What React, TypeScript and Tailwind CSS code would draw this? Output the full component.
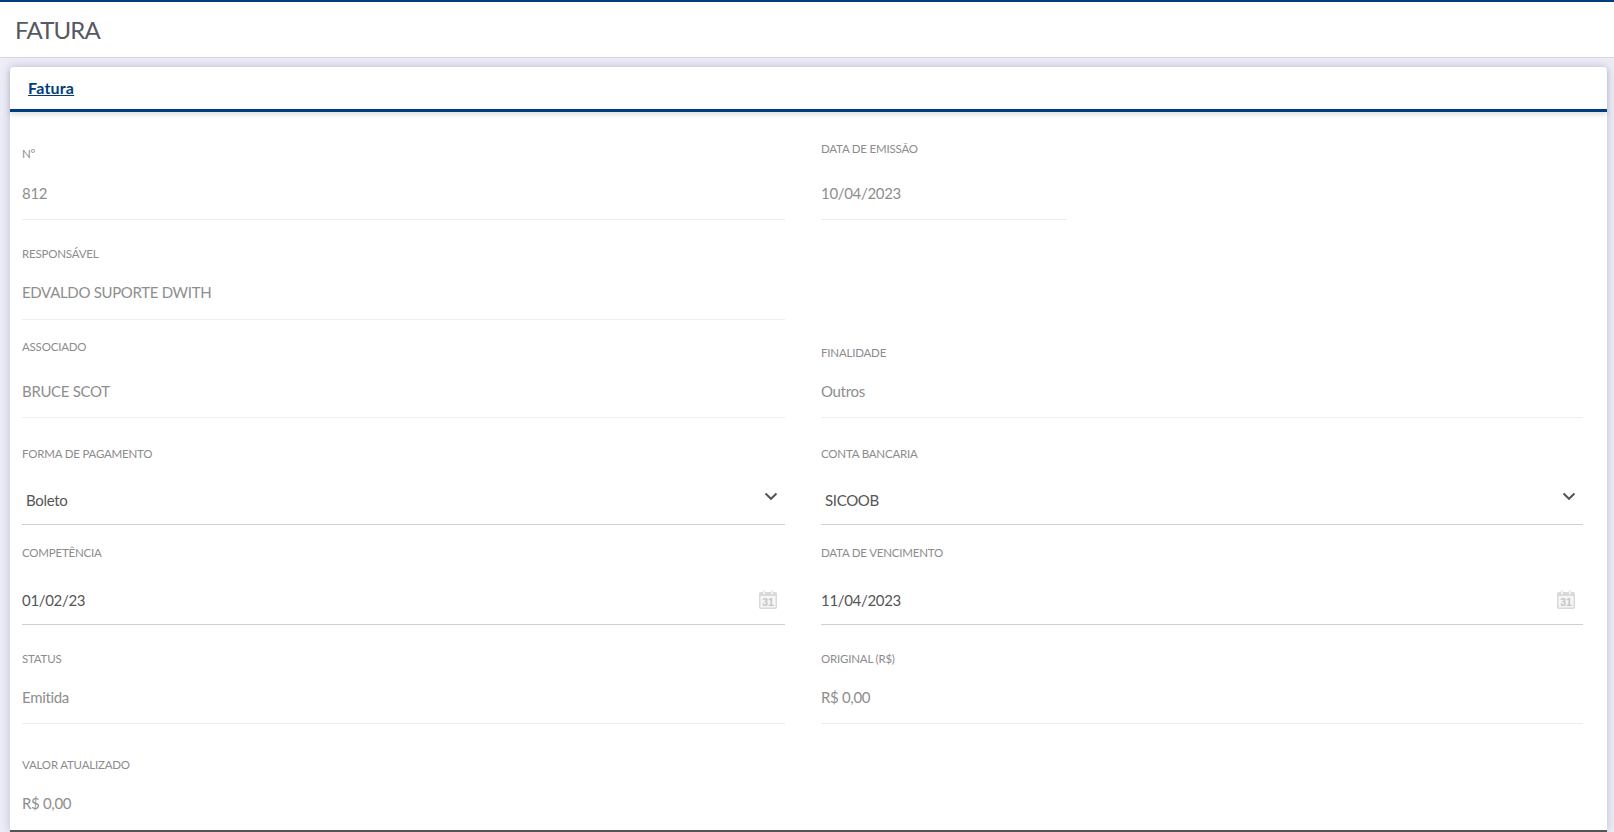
const labelFont = "font-['Lato','Noto_Sans',sans-serif]";

function Calendar() {
  return (
    <svg width="18" height="19" viewBox="0 0 18 19" className="shrink-0">
      <path d="M2 2h14a2 2 0 0 1 2 2v13a2 2 0 0 1-2 2H2a2 2 0 0 1-2-2V4a2 2 0 0 1 2-2z" fill="#d9d9d9" />
      <rect x="1.5" y="6" width="15" height="11.5" fill="#f6f6f6" />
      <rect x="4" y="0.5" width="2" height="4" rx="1" fill="#fff" stroke="#d9d9d9" strokeWidth="0.6" />
      <rect x="12" y="0.5" width="2" height="4" rx="1" fill="#fff" stroke="#d9d9d9" strokeWidth="0.6" />
      <text x="9" y="16" textAnchor="middle" fontSize="10.5" fontWeight="700" fill="#c4c4c4" fontFamily="Liberation Sans, sans-serif">31</text>
    </svg>
  );
}

function Chevron() {
  return (
    <svg width="14" height="9" viewBox="0 0 14 9" className="shrink-0">
      <path d="M1.5 1.5 7 6.8l5.5-5.3" fill="none" stroke="#555555" strokeWidth="2" />
    </svg>
  );
}

type FieldProps = {
  label: string;
  value: string;
  dark?: boolean;
  select?: boolean;
  date?: boolean;
  line?: string;
  lineWidth?: string;
  valueGap?: string;
};

function Field({ label, value, dark, select, date, line = "border-[#eeeeee]", lineWidth = "w-full", valueGap = "pb-[10px]" }: FieldProps) {
  return (
    <div className={`${lineWidth} flex flex-col h-full`}>
      <div className="text-[11.5px] leading-[16px] text-[#8c8c8c] uppercase tracking-[-0.2px]">{label}</div>
      <div className={`mt-auto h-[44px] border-b ${line} flex items-center justify-between ${dark ? "pb-[6px]" : valueGap}`}>
        <span className={`text-[15px] leading-[20px] tracking-[-0.32px] ${dark ? "text-[#565656]" : "text-[#8e8e8e]"} ${select ? "pl-[4px]" : ""}`}>
          {value}
        </span>
        {select && <span className="mb-[6px] mr-[7px]"><Chevron /></span>}
        {date && <span className="mr-[8px]"><Calendar /></span>}
      </div>
    </div>
  );
}

export default function App() {
  return (
    <div className={`h-[832px] overflow-hidden bg-[#ecedf7] ${labelFont}`}>
      <header className="h-[58px] bg-white border-t-2 border-[#003c7e] border-b border-b-[#d8d8e4] flex items-center pl-[15px]">
        <h1 className="text-[24px] leading-[30px] tracking-[-0.8px] text-[#575962] font-normal">FATURA</h1>
      </header>

      <main className="mt-[9px] ml-[10px] mr-[7px] h-[765px] bg-white rounded-t-[4px] border-b-2 border-[#555555] shadow-[0_0_10px_rgba(80,80,120,0.3)]">
        <div className="h-[45px] border-b-[3px] border-[#003c7e] flex items-center pl-[18px] shadow-[0_3px_5px_rgba(0,0,0,0.12)]">
          <a className="text-[16px] tracking-[0.2px] font-bold leading-[20px] text-[#003c7e] underline">Fatura</a>
        </div>

        <div className="pl-[12px] pr-[24px] grid grid-cols-[763px_762px] gap-x-[36px]">
          <div className="h-[108px] pt-[34px]"><Field label="N°" value="812" /></div>
          <div className="h-[108px] pt-[29px]"><Field label="Data de emissão" value="10/04/2023" lineWidth="w-[246px]" /></div>

          <div className="h-[100px] pt-[26px]"><Field label="Responsável" value="EDVALDO SUPORTE DWITH" valueGap="pb-[12px]" /></div>
          <div className="h-[100px]" />

          <div className="h-[98px] pt-[19px]"><Field label="Associado" value="BRUCE SCOT" /></div>
          <div className="h-[98px] pt-[25px]"><Field label="Finalidade" value="Outros" /></div>

          <div className="h-[107px] pt-[28px]"><Field label="Forma de pagamento" value="Boleto" dark select line="border-[#cfcfcf]" /></div>
          <div className="h-[107px] pt-[28px]"><Field label="Conta bancaria" value="SICOOB" dark select line="border-[#cfcfcf]" /></div>

          <div className="h-[100px] pt-[20px]"><Field label="Competência" value="01/02/23" dark date line="border-[#cfcfcf]" /></div>
          <div className="h-[100px] pt-[20px]"><Field label="Data de vencimento" value="11/04/2023" dark date line="border-[#cfcfcf]" /></div>

          <div className="h-[99px] pt-[26px]"><Field label="Status" value="Emitida" /></div>
          <div className="h-[99px] pt-[26px]"><Field label="Original (R$)" value="R$ 0,00" /></div>

          <div className="h-[106px] pt-[33px]"><Field label="Valor atualizado" value="R$ 0,00" line="border-transparent" /></div>
        </div>
      </main>
    </div>
  );
}
